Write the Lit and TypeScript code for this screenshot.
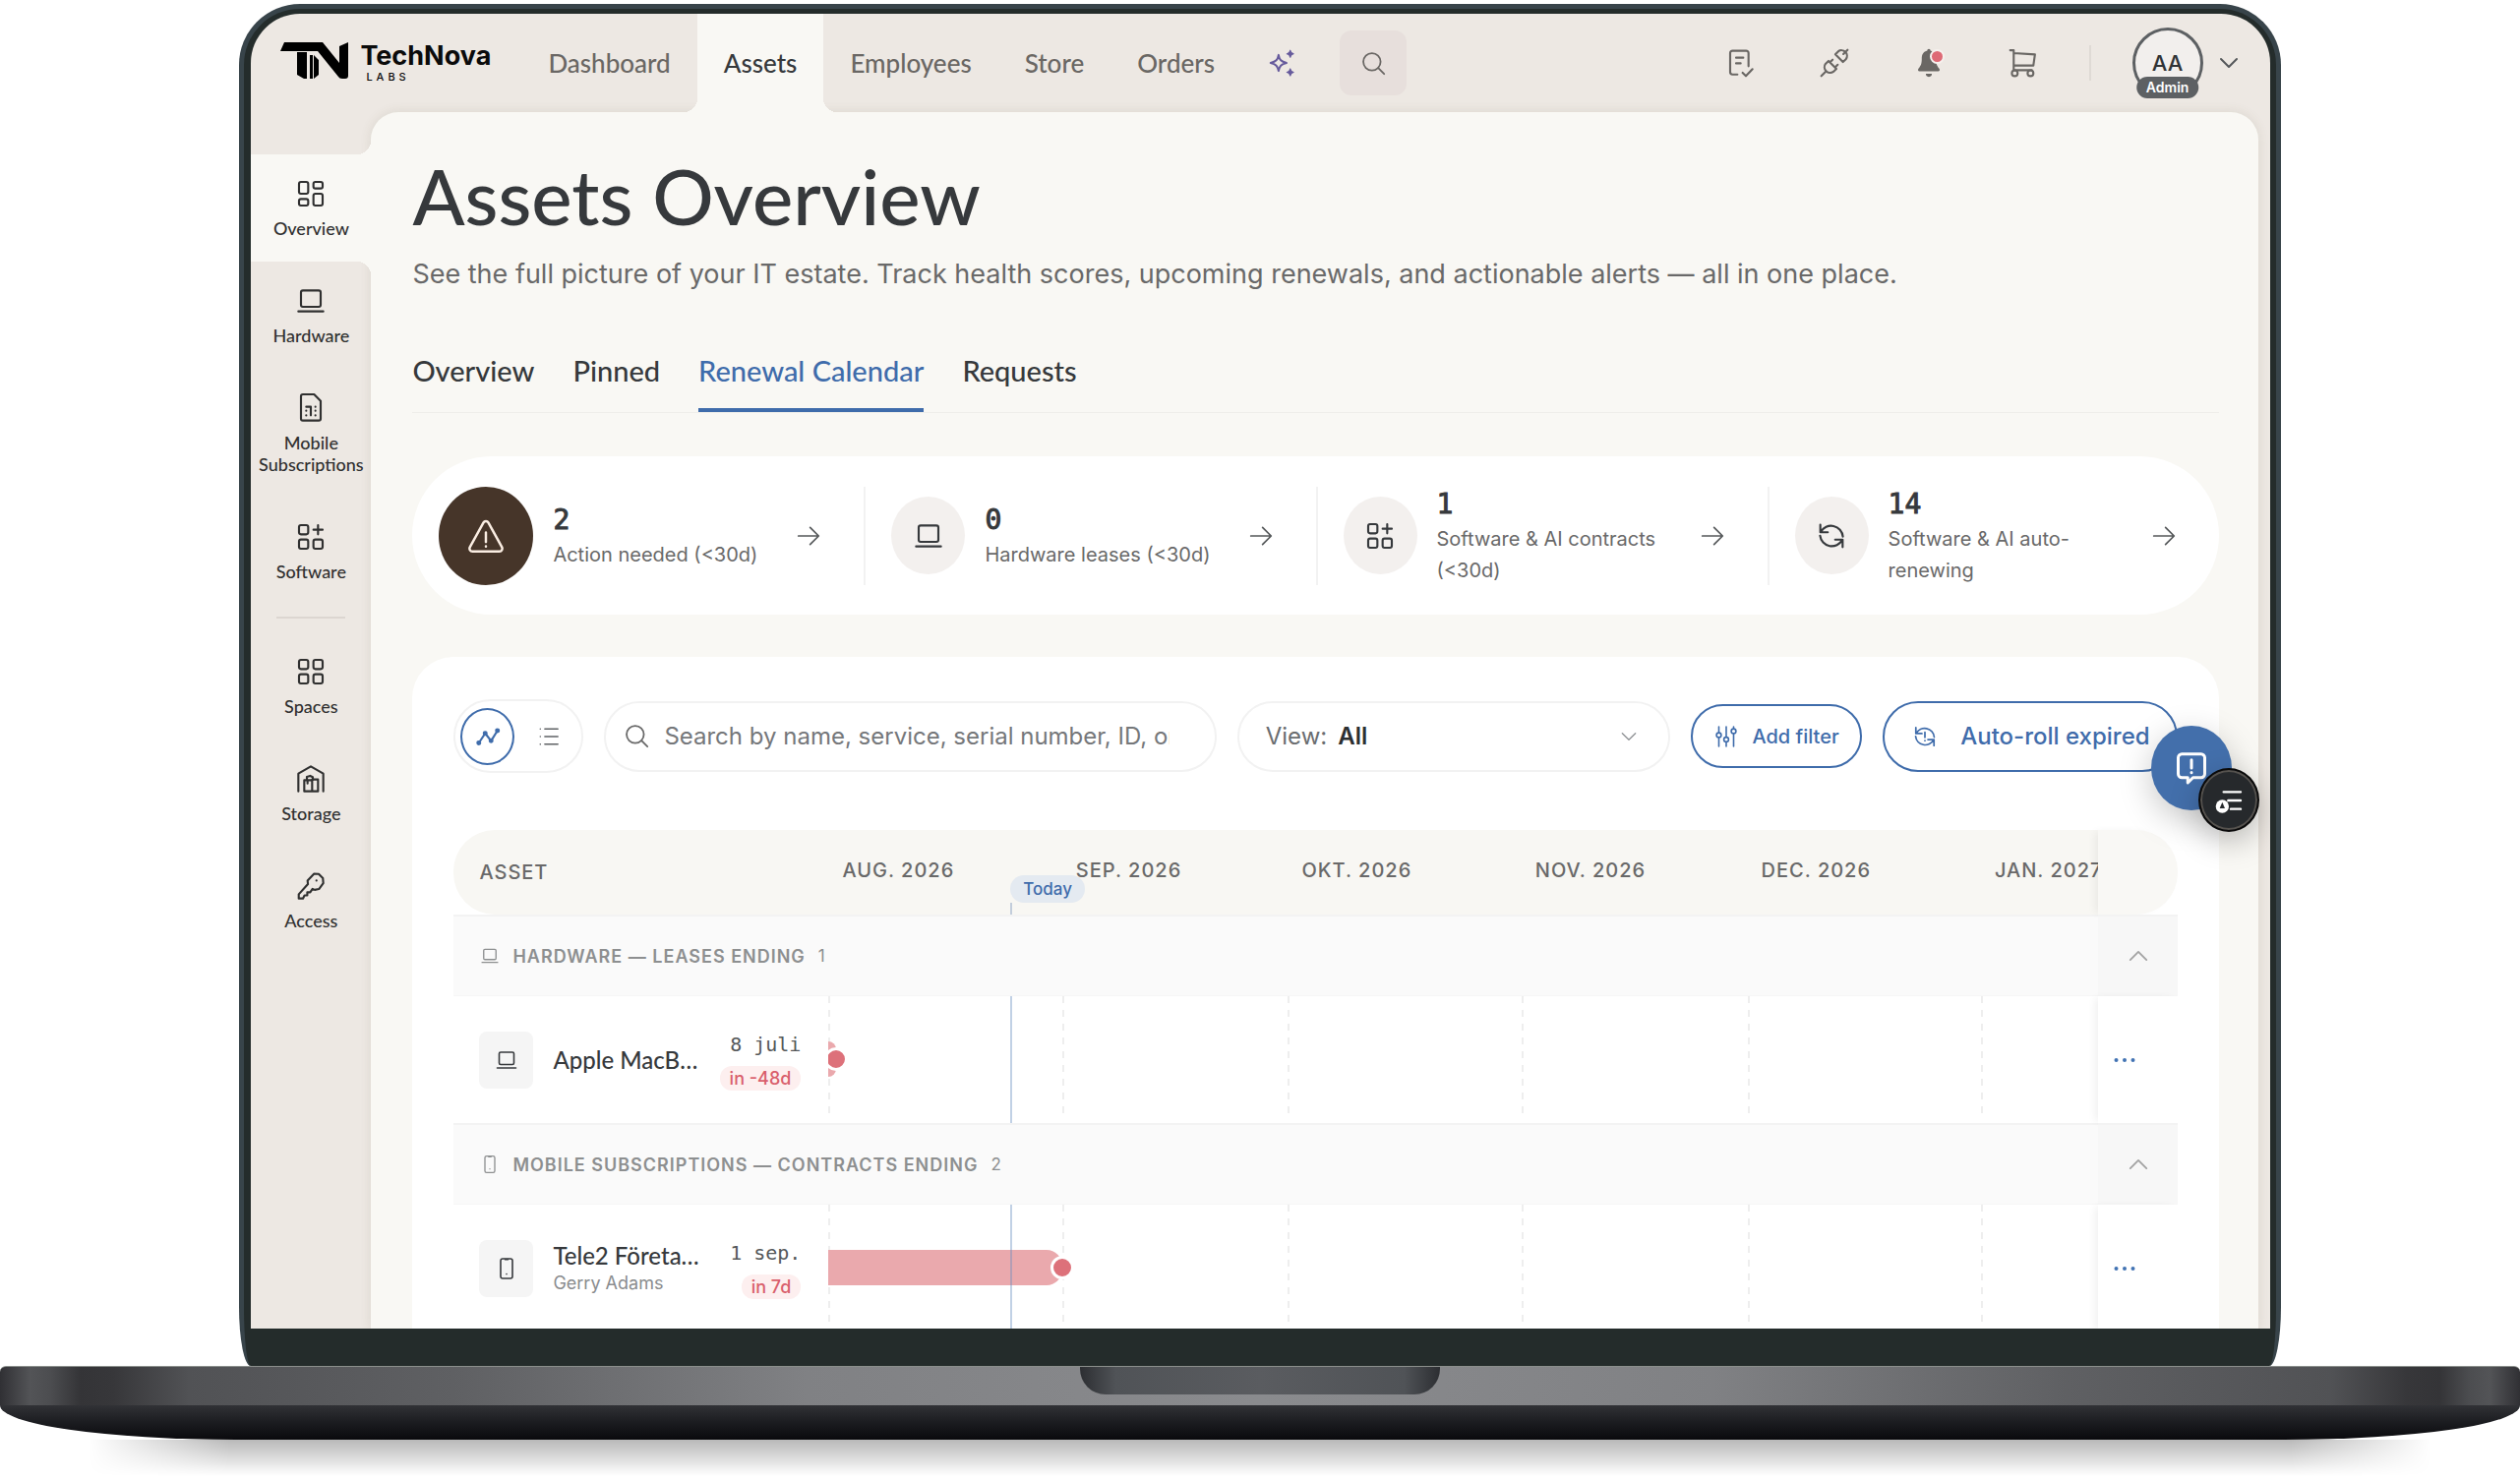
import { LitElement, html, css, svg, nothing } from "lit";
import type { SVGTemplateResult } from "lit";
import { customElement, property } from "lit/decorators.js";
import { classMap } from "lit/directives/class-map.js";
import { styleMap } from "lit/directives/style-map.js";

const ICONS: Record<string, SVGTemplateResult> = {
  overview: svg`<rect x="3" y="3" width="7" height="9" rx="1.5"/><rect x="14" y="3" width="7" height="5" rx="1.5"/><rect x="14" y="12" width="7" height="9" rx="1.5"/><rect x="3" y="16" width="7" height="5" rx="1.5"/>`,
  laptop: svg`<rect x="4.5" y="4" width="15" height="12.5" rx="1.5"/><path d="M2.5 20h19"/>`,
  sim: svg`<path d="M6 1.500h8.500l5 5V20a1.500 1.500 0 0 1-1.500 1.500H6A1.500 1.500 0 0 1 4.500 20V3A1.500 1.500 0 0 1 6 1.500z"/><path d="M8.500 11h3.500v6.500M8.500 14v.1M8.500 17.500v.1M15.500 11v.1M15.500 14v.1M15.500 17.500v.1"/>`,
  software: svg`<rect x="3" y="3" width="7" height="7" rx="1.5"/><rect x="3" y="14" width="7" height="7" rx="1.5"/><rect x="14" y="14" width="7" height="7" rx="1.5"/><path d="M17.500 3v7M14 6.500h7"/>`,
  spaces: svg`<rect x="3" y="3" width="7" height="7" rx="1.5"/><rect x="14" y="3" width="7" height="7" rx="1.5"/><rect x="3" y="14" width="7" height="7" rx="1.5"/><rect x="14" y="14" width="7" height="7" rx="1.5"/>`,
  storage: svg`<path d="M2.500 21.500V8L12 2.500 21.500 8v13.500"/><path d="M7 13h6v8.500H7zM9 13v-2.500l2.500-.8 2 1V13M13 12.500h4.500v9H13M7 21.500h10.500M9.500 13v2.500"/>`,
  key: svg`<path d="M14.500 2.600 18 2.800 21.200 6l.3 3.800-3.300 4.500-3.200.6-1.700-.7-1.800 2.600H9.300v2.300H7.200L6 21.500H2.800v-3.200l7-7.800-.3-2.700z"/><path d="M16.300 7.700v.1"/>`,
  sparkle: svg`<path d="M9.500 5.500c.7 4 2 5.400 6.500 6.500-4.500 1.100-5.800 2.500-6.500 6.500-.7-4-2-5.400-6.500-6.500 4.500-1.100 5.800-2.500 6.500-6.500z"/><path fill="currentColor" stroke-width="1" d="M19 1.800c.3 1.800 1 2.500 2.700 2.800-1.700.3-2.400 1-2.700 2.800-.3-1.800-1-2.500-2.700-2.800 1.700-.3 2.400-1 2.700-2.800zM19 16.800c.3 1.800 1 2.500 2.700 2.800-1.700.3-2.400 1-2.700 2.800-.3-1.800-1-2.500-2.700-2.800 1.700-.3 2.400-1 2.700-2.800z"/>`,
  search: svg`<circle cx="10.500" cy="10.500" r="7.800"/><path d="m16.200 16.200 5.300 5.300"/>`,
  doc: svg`<path d="M18.500 14.500V4.500A1.800 1.800 0 0 0 16.700 2.700H6.300A1.800 1.800 0 0 0 4.500 4.500V19A1.800 1.800 0 0 0 6.300 20.800H10M9 8h5.500M9 12.300h3.500M14 19.500l2.500 2.500 5-5.300"/>`,
  plug: svg`<path d="m2 22 3.200-3.200M22 2l-3.200 3.200M11.200 18.700a4.300 4.300 0 0 1-6-6l2.300-2.200 6 6zM8.600 11.500l2-2M12.500 15.400l2-2M12.700 5.500l2.100-2.200a4.200 4.200 0 0 1 5.900 5.900L18.500 11.300z"/>`,
  bell: svg`<path fill="currentColor" stroke="none" d="M12 1.300c.8 0 1.200.6 1.200 1.300 2.800.6 4.200 2.900 4.200 6 0 3.700.6 5.500 2.500 7.700.7.900.4 2-.8 2H4.900c-1.200 0-1.500-1.100-.8-2 1.900-2.200 2.500-4 2.500-7.700 0-3.100 1.400-5.400 4.200-6 0-.7.400-1.300 1.200-1.300zM9.700 20.300h4.600a2.300 2.300 0 0 1-4.600 0z"/>`,
  cart: svg`<path d="M2 2.300h2.700v15.200h13.800M4.700 4.500l16.200 1-1.200 8.500H4.700"/><circle cx="5.500" cy="19.800" r="2.200"/><circle cx="17.500" cy="19.800" r="2.200"/>`,
  down: svg`<path d="m4 8 8 8 8-8"/>`,
  up: svg`<path d="m3 16.500 9-9 9 9"/>`,
  warning: svg`<path d="M10.600 4.200 2.700 18.500A1.700 1.700 0 0 0 4.200 21h15.600a1.700 1.700 0 0 0 1.500-2.500L13.400 4.200a1.600 1.600 0 0 0-2.800 0z"/><path d="M12 10v5.500M12 18v.1"/>`,
  arrow: svg`<path d="M2.500 12h18.500M13.500 4l8 8-8 8"/>`,
  renew: svg`<path d="M3.500 3.500v5.700h5.700M3.800 9a9 9 0 0 1 16.900 3.500M20.500 20.500v-5.700h-5.700M20.200 15A9 9 0 0 1 3.300 11.800"/>`,
  renewAlert: svg`<path d="M3.500 3.500v5.700h5.700M3.800 9a9 9 0 0 1 16.900 3.500M20.500 20.500v-5.700h-5.700M20.200 15A9 9 0 0 1 3.300 11.800M12 8v4.800M12 15.800v.1"/>`,
  trend: svg`<path d="M3.500 18 9.500 9l5.500 7 6-9.500"/><g fill="currentColor"><circle cx="3.500" cy="18" r="1.300"/><circle cx="9.500" cy="9" r="1.300"/><circle cx="15" cy="16" r="1.300"/><circle cx="21" cy="6.500" r="1.300"/></g>`,
  list: svg`<path d="M7.500 3.500h14.500M7.500 12h14.500M7.500 20.500h14.500M2.500 3.500v.1M2.500 12v.1M2.500 20.500v.1"/>`,
  sliders: svg`<path d="M4.500 2v6M4.500 13v9M12 2v10M12 17.500V22M19.500 2v2M19.500 9v13"/><circle cx="4.500" cy="10.500" r="2.400"/><circle cx="12" cy="15" r="2.400"/><circle cx="19.500" cy="6.500" r="2.400"/>`,
  phone: svg`<rect x="6" y="2" width="12" height="20" rx="2"/><path d="M10.500 2.800h3M12 17.500v.1"/>`,
  dots: svg`<g fill="currentColor" stroke="none"><circle cx="3.500" cy="12" r="2"/><circle cx="12" cy="12" r="2"/><circle cx="20.500" cy="12" r="2"/></g>`,
  feedback: svg`<path d="M5.500 2.500h13A2.500 2.500 0 0 1 21 5v11a2.500 2.500 0 0 1-2.500 2.500H13L9.500 22v-3.500h-4A2.500 2.500 0 0 1 3 16V5a2.500 2.500 0 0 1 2.500-2.500z"/><path d="M12 6.500v5.500M12 15v.1"/>`,
  assist: svg`<path stroke-width="1.800" d="M8 5.500h13M11.500 12h9.500M13.500 18.500H21"/><circle cx="7" cy="16.500" r="5" fill="currentColor" stroke="none"/><path d="m7 13.300 2 4.700H5z" fill="#26292c" stroke="none"/>`,
};

@customElement("ui-icon")
class UiIcon extends LitElement {
  static styles = css`
    :host { display: inline-flex; flex: none; width: var(--size, 28px); height: var(--size, 28px); }
    svg { width: 100%; height: 100%; fill: none; stroke: currentColor; stroke-width: var(--stroke, 1.6); stroke-linecap: round; stroke-linejoin: round; }
  `;
  @property() name = "";
  render() {
    return html`<svg viewBox="0 0 24 24" aria-hidden="true">${ICONS[this.name] ?? nothing}</svg>`;
  }
}

const NAV = ["Dashboard", "Assets", "Employees", "Store", "Orders"];

const SIDE = [
  { icon: "overview", label: "Overview" },
  { icon: "laptop", label: "Hardware" },
  { icon: "sim", label: "Mobile Subscriptions" },
  { icon: "software", label: "Software" },
  { icon: "spaces", label: "Spaces" },
  { icon: "storage", label: "Storage" },
  { icon: "key", label: "Access" },
];

const TABS = ["Overview", "Pinned", "Renewal Calendar", "Requests"];

const STATS = [
  { icon: "warning", value: "2", label: "Action needed (<30d)" },
  { icon: "laptop", value: "0", label: "Hardware leases (<30d)" },
  { icon: "software", value: "1", label: "Software & AI contracts (<30d)" },
  { icon: "renew", value: "14", label: "Software & AI auto-renewing" },
];

const MONTHS = [
  { name: "Aug. 2026", days: 31 },
  { name: "Sep. 2026", days: 30 },
  { name: "Okt. 2026", days: 31 },
  { name: "Nov. 2026", days: 30 },
  { name: "Dec. 2026", days: 31 },
  { name: "Jan. 2027", days: 31 },
];

/* Days of the calendar that fit in the visible track. */
const VISIBLE_DAYS = 168.5;
const TODAY = 24.15;
const pct = (days: number) => `${(days / VISIBLE_DAYS) * 100}%`;

interface Asset { icon: string; name: string; owner?: string; date: string; due: string; end: number; }

const GROUPS: { icon: string; title: string; rows: Asset[]; count: number }[] = [
  { icon: "laptop", title: "Hardware — leases ending", count: 1,
    rows: [{ icon: "laptop", name: "Apple MacB…", date: "8 juli", due: "in -48d", end: 1 }] },
  { icon: "phone", title: "Mobile subscriptions — contracts ending", count: 2,
    rows: [{ icon: "phone", name: "Tele2 Företa…", owner: "Gerry Adams", date: "1 sep.", due: "in 7d", end: 31 }] },
];

@customElement("app-root")
class AppRoot extends LitElement {
  static styles = css`
    :host {
      --bar: #ede8e3; --page: #f9f8f4; --ink: #36393c; --soft: #696969; --blue: #3f6cab; --red: #dd717a;
      --round: Lato, "Noto Sans", sans-serif;
      display: flex; flex-direction: column; height: 100vh; box-sizing: border-box; padding-top: 4px;
      overflow: hidden; background: #fff; color: var(--ink);
      font-family: Inter, "Liberation Sans", sans-serif;
    }
    *, *::before, *::after { box-sizing: border-box; }
    a { color: inherit; text-decoration: none; }
    button, input, select { font: inherit; color: inherit; background: none; border: 0; padding: 0; margin: 0; outline: 0; }
    h1, p { margin: 0; }

    /* laptop */
    .lid {
      flex: 1; min-height: 0; margin: 0 9.5%; display: flex;
      padding: 5px 6px 38px 7px; background: #242c2b; border: 5px solid #38444a; border-bottom: 0;
      border-radius: 62px 62px 12px 12px / 62px 62px 60px 60px;
    }
    .screen {
      position: relative; flex: 1; min-width: 0; overflow: hidden; border-radius: 50px 50px 0 0;
      display: grid; grid-template: 100px minmax(0, 1fr) / 122px minmax(0, 1fr); background: var(--bar);
    }
    .deck {
      flex: none; height: 40px; border-top: 1px solid #8b8f8c; border-radius: 6px 6px 0 0; display: flex; justify-content: center;
      background: linear-gradient(90deg, #303034, #535457 1.2%, #4c4d50 2%, #343437 3.2%, #37373a 4.500%, #515255 7.500%, #5f6063 18%, #808184 32%, #8a8b8e 50%, #808184 68%, #5f6063 82%, #515255 92.500%, #37373a 95.500%, #343437 96.800%, #4c4d50 98%, #535457 98.800%, #303034);
    }
    .notch {
      width: 366px; height: 28px; border-radius: 0 0 26px 26px;
      background: linear-gradient(90deg, #2c2e32, #505357 10%, #5a5c60 50%, #505357 90%, #2c2e32);
    }
    .keel { flex: none; height: 35px; border-radius: 0 0 240px 240px / 0 0 35px 35px; background: linear-gradient(#313236, #1b1c20 50%, #0a0a0d); }
    .shade {
      flex: none; height: 41px; margin: 0 90px; background: linear-gradient(rgba(0, 0, 0, 0.28), transparent 90%);
      mask-image: linear-gradient(90deg, transparent, #000 6%, #000 94%, transparent);
    }

    /* top bar */
    .top { grid-column: 1 / 3; display: flex; align-items: center; padding: 0 30px; color: #6a6764; }
    .logo { display: flex; align-items: flex-start; gap: 11px; width: 245px; color: #0b0b0b; }
    .logo svg { width: 70px; height: 38px; }
    .brand { display: flex; flex-direction: column; font-size: 27px; line-height: 28px; font-weight: 700; }
    .brand small { font-size: 11px; line-height: 14px; font-weight: 500; letter-spacing: 4px; padding-left: 6px; }
    .nav { display: flex; align-self: stretch; font: 500 26px/32px var(--round); }
    .nav a { position: relative; display: flex; align-items: center; padding: 0 27px; }
    .nav a.on { z-index: 2; background: var(--page); color: var(--ink); }
    .nav a.on::before, .nav a.on::after { content: ""; position: absolute; bottom: 0; width: 14px; height: 14px; }
    .nav a.on::before { right: 100%; background: radial-gradient(circle at 0 0, transparent 14px, var(--page) 14px); }
    .nav a.on::after { left: 100%; background: radial-gradient(circle at 100% 0, transparent 14px, var(--page) 14px); }
    .spark { color: #665a9c; margin: 0 44px 0 26px; --size: 30px; display: flex; }
    .find { width: 68px; height: 66px; border-radius: 12px; background: #e7dfdc; display: grid; place-items: center; --size: 27px; }
    .tools { margin-left: auto; display: flex; align-items: center; gap: 64px; --size: 32px; }
    .tools button { position: relative; display: flex; }
    .alert { position: absolute; right: 0; top: 2px; width: 11px; height: 11px; border-radius: 50%; background: #de6a76; border: 2px solid #f6f1ee; box-sizing: content-box; }
    .bar-rule { width: 2px; height: 36px; background: #dfdad5; margin: 0 42px 0 51px; }
    .user { display: flex; align-items: center; gap: 14px; --size: 24px; --stroke: 2; color: #55585b; }
    .avatar { position: relative; width: 72px; height: 72px; border: 3px solid #5d6063; border-radius: 50%; background: #f2efed; display: grid; place-items: center; font-size: 22px; font-weight: 500; color: #303336; }
    .role { position: absolute; left: 50%; bottom: -3px; translate: -50% 0; padding: 0 10px; border-radius: 11px; background: #5d6063; color: #fff; font-size: 14px; line-height: 22px; font-weight: 600; }

    /* side bar */
    .side { display: flex; flex-direction: column; align-items: stretch; padding-top: 43px; }
    .side a { position: relative; display: flex; flex-direction: column; align-items: center; gap: 8px; padding: 24px 0 23px; text-align: center; font: 500 18px/22px var(--round); color: #303030; --size: 32px; }
    .side a.on { z-index: 2; background: var(--page); }
    .side a.on::before, .side a.on::after { content: ""; position: absolute; right: 0; width: 14px; height: 14px; }
    .side a.on::before { bottom: 100%; background: radial-gradient(circle at 0 0, transparent 14px, var(--page) 14px); }
    .side a.on::after { top: 100%; background: radial-gradient(circle at 0 100%, transparent 14px, var(--page) 14px); }
    .side hr { width: 70px; height: 2px; margin: 12px auto 14px; border: 0; background: #dcd6d1; }

    /* page */
    .main { position: relative; z-index: 1; min-width: 0; margin-right: 12px; padding: 37px 40px 0 42px; background: var(--page); border-radius: 28px 28px 0 0; box-shadow: 0 0 12px rgba(90, 85, 50, 0.12); }
    h1 { font: 500 78px/96px var(--round); }
    .lead { margin-top: 14px; font-size: 27px; line-height: 36px; color: var(--soft); }
    .tabs { display: flex; gap: 39px; margin-top: 62px; border-bottom: 1px solid #efeeea; font: 500 29px/36px var(--round); }
    .tabs a { padding-bottom: 20px; border-bottom: 4px solid transparent; }
    .tabs a.on { color: var(--blue); border-color: var(--blue); }

    .stats { display: grid; grid-template-columns: repeat(4, minmax(0, 1fr)); margin-top: 44px; height: 161px; border-radius: 81px; background: #fff; }
    .stat { display: flex; align-items: center; padding: 0 43px 0 27px; }
    .stat + .stat { padding-left: 0; }
    .stat + .stat::before { content: ""; flex: none; width: 2px; height: 100px; margin-right: 26px; background: #f2f2f2; }
    .disc { flex: none; display: grid; place-items: center; width: 75px; height: 79px; border-radius: 50%; background: #f3f0ee; --size: 32px; }
    .disc.hot { width: 96px; height: 100px; background: #463529; color: #fbeee3; --size: 42px; --stroke: 1.4; }
    .stat-text { flex: 1; min-width: 0; margin: 0 20px; }
    .stat-value { font: 400 28px/38px "DejaVu Sans Mono", monospace; -webkit-text-stroke: 1px currentColor; }
    .stat-label { font-size: 20px; line-height: 32px; color: var(--soft); }
    .go { --size: 26px; color: #55585a; }

    .panel { margin-top: 43px; padding: 43px 42px 80px; background: #fff; border-radius: 42px; }
    .filters { display: flex; align-items: center; gap: 21px; }
    .toggle { flex: none; display: flex; align-items: center; gap: 7px; width: 132px; height: 75px; padding-left: 5px; border: 2px solid #f2f2f2; border-radius: 38px; }
    .toggle button { width: 55px; height: 58px; border-radius: 50%; display: grid; place-items: center; color: #5f6265; --size: 22px; }
    .toggle button.on { border: 2px solid var(--blue); color: var(--blue); --size: 26px; --stroke: 2; }
    .field { display: flex; align-items: center; height: 72px; border: 2px solid #f2f2f2; border-radius: 36px; font-size: 24px; line-height: 32px; color: var(--soft); }
    .search { flex: 594 0 0; min-width: 0; gap: 14px; padding: 0 46px 0 18px; --size: 27px; }
    .search input { flex: 1; min-width: 0; height: 40px; }
    .search input::placeholder { color: #75777a; opacity: 1; }
    .view { flex: 406 0 0; min-width: 0; padding: 0 30px 0 27px; --size: 20px; color: #6a6d70; }
    .view ui-icon { color: #8f9295; }
    .view select { flex: 1; min-width: 0; margin-left: 11px; appearance: none; font-weight: 600; color: #2c2f31; }
    .pill { flex: none; display: flex; align-items: center; justify-content: space-between; border: 2px solid var(--blue); color: var(--blue); font-weight: 500; }
    .pill.small { width: 174px; height: 65px; padding: 0 21px 0 22px; border-radius: 33px; font-size: 20px; --size: 24px; }
    .pill.large { width: 300px; height: 72px; padding: 0 26px 0 28px; border-radius: 36px; font-size: 24px; --size: 26px; }

    table { width: 100%; margin-top: 58px; border-collapse: separate; border-spacing: 0; table-layout: fixed; }
    .col-asset { width: 381px; }
    .col-act { width: 81px; }
    th, td { padding: 0; text-align: left; font-weight: 400; }
    thead th { height: 86px; background: #f8f7f3; font-size: 20px; font-weight: 500; letter-spacing: 1px; text-transform: uppercase; color: var(--soft); }
    thead th:first-child { padding-left: 26px; border-radius: 42px 0 0 42px; }
    .act { position: relative; z-index: 2; background: #fff; box-shadow: -5px 0 8px -2px rgba(0, 0, 0, 0.06); }
    thead th.act { border-radius: 0 42px 42px 0; background: #f9f8f5; }
    .track { position: relative; display: flex; overflow: hidden; }
    .track.head { height: 86px; align-items: center; }
    .track.head .month { padding-left: 14px; padding-bottom: 4px; white-space: nowrap; }
    .track.body { height: 129px; }
    .track.body .month { height: 122px; background: repeating-linear-gradient(#eeeeee 0 7px, transparent 7px 14px) left / 2px 100% no-repeat; }
    .month { flex: none; }
    .today { position: absolute; top: 46px; bottom: 0; }
    .today span { display: block; padding: 0 13px; border-radius: 14px; background: #e4eaf1; color: var(--blue); font-size: 17px; line-height: 28px; letter-spacing: 0; text-transform: none; }
    .today::after { content: ""; display: block; width: 2px; height: 12px; background: #c3cddb; }
    .now { position: absolute; top: 0; bottom: 0; width: 2px; background: rgba(100, 140, 190, 0.4); }
    .bar { position: absolute; left: 0; top: 46px; height: 36px; border-radius: 0 16px 16px 0; background: #eaa9ad; }
    .dot { position: absolute; top: 52px; width: 24px; height: 24px; margin-left: -12px; border: 3px solid #fff; border-radius: 50%; background: var(--red); }

    .group th, .group td { height: 83px; background: #fafafa; border-top: 2px solid #f3f3f3; border-bottom: 1px solid #f6f6f6; }
    .group .act { background: #f7f7f7; box-shadow: none; }
    .group-name { display: flex; align-items: center; padding-left: 27px; font-size: 18px; font-weight: 600; letter-spacing: 1px; text-transform: uppercase; color: #8d8f90; --size: 20px; }
    .group-name span { margin: 0 13px; }
    .group-name small { font-size: 17px; font-weight: 400; }
    .act button { display: flex; margin-left: 30px; color: #a3a3a3; --size: 22px; --stroke: 2; }
    .asset .act button { margin-left: 15px; color: #4273b3; --size: 24px; }
    .asset-cell { display: flex; align-items: center; padding: 0 28px 0 26px; }
    .tile { flex: none; width: 55px; height: 58px; border-radius: 8px; background: #f5f5f5; display: grid; place-items: center; --size: 24px; margin-right: 20px; }
    .asset-name { flex: 1; min-width: 0; white-space: nowrap; font: 500 24px/30px var(--round); }
    .asset-name small { display: block; font: 400 18px/26px Inter, sans-serif; color: #8a8c8e; }
    .due { flex: none; display: flex; flex-direction: column; align-items: flex-end; gap: 7px; font: 400 20px/30px "DejaVu Sans Mono", monospace; color: #55585a; }
    .due span { padding: 0 10px; border-radius: 12px; background: #fdefef; color: #d95f6c; font: 500 18px/25px Inter, sans-serif; }

    .fab { position: absolute; display: grid; place-items: center; border-radius: 50%; color: #fff; z-index: 3; }
    .fab.chat { right: 39px; top: 724px; width: 82px; height: 86px; background: #436fab; --size: 36px; --stroke: 2; box-shadow: 0 10px 34px rgba(0, 0, 0, 0.22); }
    .fab.menu { right: 11px; top: 767px; width: 62px; height: 65px; background: #26292c; border: 2px solid #0a0a0a; --size: 32px; box-shadow: 0 10px 30px rgba(0, 0, 0, 0.25), inset 0 0 0 2px #55524e; }
  `;

  private top() {
    return html`<header class="top">
      <a class="logo" href="#home">
        <svg viewBox="0 0 70 38" aria-hidden="true">
          <path d="M4 0h39l17 21V4l9-4v34q0 3-3 3h-3q-3 0-4-2L38 9H0z"/>
          <path d="M17 10h10v27h-3l-7-4zM30 13h3v24h-3zM34 13l5 5v15l-5 4z"/>
        </svg>
        <span class="brand">TechNova<small>LABS</small></span>
      </a>
      <nav class="nav" aria-label="Main">
        ${NAV.map((n) => html`<a href="#${n.toLowerCase()}" class=${classMap({ on: n === "Assets" })}>${n}</a>`)}
      </nav>
      <a class="spark" href="#ai" aria-label="Assistant"><ui-icon name="sparkle"></ui-icon></a>
      <button class="find" aria-label="Search"><ui-icon name="search"></ui-icon></button>
      <div class="tools">
        <button aria-label="Tasks"><ui-icon name="doc"></ui-icon></button>
        <button aria-label="Integrations"><ui-icon name="plug"></ui-icon></button>
        <button aria-label="Notifications"><ui-icon name="bell"></ui-icon><i class="alert"></i></button>
        <button aria-label="Cart"><ui-icon name="cart"></ui-icon></button>
      </div>
      <div class="bar-rule"></div>
      <button class="user" aria-label="Account">
        <span class="avatar">AA<span class="role">Admin</span></span>
        <ui-icon name="down"></ui-icon>
      </button>
    </header>`;
  }

  private side() {
    return html`<nav class="side" aria-label="Assets">
      ${SIDE.map((s, i) => html`
        ${i === 4 ? html`<hr />` : nothing}
        <a href="#${s.icon}" class=${classMap({ on: i === 0 })}><ui-icon name=${s.icon}></ui-icon>${s.label}</a>`)}
    </nav>`;
  }

  private filters() {
    return html`<div class="filters">
      <div class="toggle">
        <button class="on" aria-label="Timeline"><ui-icon name="trend"></ui-icon></button>
        <button aria-label="List"><ui-icon name="list"></ui-icon></button>
      </div>
      <label class="field search">
        <ui-icon name="search"></ui-icon>
        <input type="text" aria-label="Search assets" placeholder="Search by name, service, serial number, ID, or" />
      </label>
      <label class="field view">View:
        <select><option>All</option></select>
        <ui-icon name="down"></ui-icon>
      </label>
      <button class="pill small"><ui-icon name="sliders"></ui-icon>Add filter</button>
      <button class="pill large"><ui-icon name="renewAlert"></ui-icon>Auto-roll expired</button>
    </div>`;
  }

  private row(a: Asset) {
    const at = a.end > 1 ? pct(a.end) : "8px";
    return html`<tr class="asset">
      <td><div class="asset-cell">
        <span class="tile"><ui-icon name=${a.icon}></ui-icon></span>
        <div class="asset-name">${a.name}${a.owner ? html`<small>${a.owner}</small>` : nothing}</div>
        <div class="due">${a.date}<span>${a.due}</span></div>
      </div></td>
      <td><div class="track body">
        ${MONTHS.map((m) => html`<div class="month" style=${styleMap({ width: pct(m.days) })}></div>`)}
        <div class="bar" style=${styleMap({ width: at })}></div>
        <div class="now" style=${styleMap({ left: pct(TODAY) })}></div>
        <div class="dot" style=${styleMap({ left: at })}></div>
      </div></td>
      <td class="act"><button aria-label="More"><ui-icon name="dots"></ui-icon></button></td>
    </tr>`;
  }

  private calendar() {
    return html`<table>
      <colgroup><col class="col-asset" /><col /><col class="col-act" /></colgroup>
      <thead><tr>
        <th>Asset</th>
        <th><div class="track head">
          ${MONTHS.map((m) => html`<div class="month" style=${styleMap({ width: pct(m.days) })}>${m.name}</div>`)}
          <div class="today" style=${styleMap({ left: pct(TODAY) })}><span>Today</span></div>
        </div></th>
        <th class="act"></th>
      </tr></thead>
      <tbody>
        ${GROUPS.map((g) => html`
          <tr class="group">
            <th colspan="2"><div class="group-name"><ui-icon name=${g.icon}></ui-icon><span>${g.title}</span><small>${g.count}</small></div></th>
            <td class="act"><button aria-label="Collapse"><ui-icon name="up"></ui-icon></button></td>
          </tr>
          ${g.rows.map((r) => this.row(r))}`)}
      </tbody>
    </table>`;
  }

  render() {
    return html`
      <div class="lid"><div class="screen">
        ${this.top()}${this.side()}
        <main class="main">
          <h1>Assets Overview</h1>
          <p class="lead">See the full picture of your IT estate. Track health scores, upcoming renewals, and actionable alerts — all in one place.</p>
          <nav class="tabs" aria-label="Sections">
            ${TABS.map((t, i) => html`<a href="#tab-${i}" class=${classMap({ on: i === 2 })}>${t}</a>`)}
          </nav>
          <section class="stats">
            ${STATS.map((s, i) => html`<a class="stat" href="#stat-${i}">
              <span class=${classMap({ disc: true, hot: i === 0 })}><ui-icon name=${s.icon}></ui-icon></span>
              <div class="stat-text"><div class="stat-value">${s.value}</div><div class="stat-label">${s.label}</div></div>
              <ui-icon class="go" name="arrow"></ui-icon>
            </a>`)}
          </section>
          <section class="panel">${this.filters()}${this.calendar()}</section>
        </main>
        <button class="fab chat" aria-label="Feedback"><ui-icon name="feedback"></ui-icon></button>
        <button class="fab menu" aria-label="Checklist"><ui-icon name="assist"></ui-icon></button>
      </div></div>
      <div class="deck"><div class="notch"></div></div>
      <div class="keel"></div>
      <div class="shade"></div>`;
  }
}
